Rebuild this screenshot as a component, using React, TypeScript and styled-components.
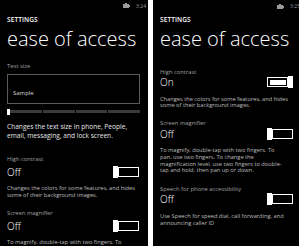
import { FC } from "react";
import styled, { createGlobalStyle } from "styled-components";

const GlobalStyle = createGlobalStyle`
  body {
    margin: 0;
    background: #fff;
  }
`;

const Screens = styled.div`
  display: flex;
  gap: 5px;
  width: 299px;
  height: 246px;
  overflow: hidden;
  background: #fff;
  font-family: "Open Sans", "Noto Sans", sans-serif;
`;

const Phone = styled.div<{ $width: number; $padRight: number }>`
  display: flex;
  flex-direction: column;
  width: ${(p) => p.$width}px;
  height: 246px;
  flex-shrink: 0;
  box-sizing: border-box;
  padding: 0 ${(p) => p.$padRight}px 0 7px;
  background: #000;
  color: #fff;
  overflow: hidden;
`;

const StatusBar = styled.div`
  display: flex;
  justify-content: flex-end;
  align-items: center;
  gap: 6px;
  height: 12px;
  margin-right: -6px;
  font-size: 5px;
  color: #9a9a9a;
`;

const PageLabel = styled.div`
  margin-top: 4px;
  font-size: 6.5px;
  line-height: 8px;
  font-weight: 600;
  letter-spacing: 0.1px;
`;

const Title = styled.div`
  margin-top: 5px;
  font-size: 20px;
  line-height: 20px;
  font-weight: 300;
  white-space: nowrap;
`;

const FieldLabel = styled.div<{ $top: number }>`
  margin-top: ${(p) => p.$top}px;
  font-size: 5.8px;
  line-height: 8px;
  color: #a0a0a0;
  white-space: nowrap;
`;

const SampleBox = styled.div`
  display: flex;
  align-items: flex-end;
  height: 31px;
  margin-top: 4px;
  box-sizing: border-box;
  border: 1px solid #5a5a5a;
  padding: 0 0 6px 5px;
  font-size: 6px;
  line-height: 8px;
  color: #d8d8d8;
`;

const Slider = styled.div`
  display: flex;
  align-items: center;
  height: 5px;
  margin-top: 5px;
`;

const SliderThumb = styled.div`
  width: 3px;
  height: 6px;
  background: #fff;
`;

const SliderTrack = styled.div`
  display: flex;
  flex: 1;
  gap: 1px;
  height: 3px;
`;

const SliderStep = styled.div`
  flex: 1;
  background: #3a3a3a;
`;

const Description = styled.div<{ $big?: boolean; $top: number }>`
  margin-top: ${(p) => p.$top}px;
  font-size: ${(p) => (p.$big ? 6.6 : 5.7)}px;
  line-height: ${(p) => (p.$big ? 9 : 6.8)}px;
  color: ${(p) => (p.$big ? "#e6e6e6" : "#bdbdbd")};
  white-space: nowrap;
`;

const ValueRow = styled.div<{ $top: number }>`
  display: flex;
  justify-content: space-between;
  align-items: center;
  height: 12px;
  margin-top: ${(p) => p.$top}px;
`;

const Value = styled.span`
  font-size: 10px;
  font-weight: 300;
  line-height: 12px;
`;

const Toggle = styled.div<{ $on: boolean }>`
  display: flex;
  flex-direction: ${(p) => (p.$on ? "row-reverse" : "row")};
  align-items: center;
  width: 26px;
  height: 12px;
  margin-right: 1px;
`;

const ToggleThumb = styled.div`
  width: 5px;
  height: 12px;
  background: #fff;
  flex-shrink: 0;
`;

const ToggleTrack = styled.div<{ $on: boolean }>`
  flex: 1;
  height: 10px;
  box-sizing: border-box;
  border: 1.5px solid #fff;
  padding: 1.5px;
  &::after {
    content: "";
    display: ${(p) => (p.$on ? "block" : "none")};
    height: 100%;
    background: #fff;
  }
`;

const StatusIcon: FC = () => (
  <svg width="7" height="5" viewBox="0 0 7 5">
    <rect x="0" y="1" width="6" height="4" fill="#9a9a9a" />
    <rect x="6" y="2" width="1" height="2" fill="#9a9a9a" />
    <rect x="2" y="0" width="2" height="1" fill="#9a9a9a" />
  </svg>
);

interface SettingProps {
  label: string;
  value: string;
  on?: boolean;
  top: number;
  rowTop: number;
  lines: string[];
}

const Setting: FC<SettingProps> = ({ label, value, on = false, top, rowTop, lines }) => (
  <>
    <FieldLabel $top={top}>{label}</FieldLabel>
    <ValueRow $top={rowTop}>
      <Value>{value}</Value>
      <Toggle $on={on}>
        <ToggleThumb />
        <ToggleTrack $on={on} />
      </Toggle>
    </ValueRow>
    <Description $top={7.5}>
      {lines.map((l) => (
        <div key={l}>{l}</div>
      ))}
    </Description>
  </>
);

const Header: FC<{ time: string }> = ({ time }) => (
  <>
    <StatusBar>
      <StatusIcon />
      <span>{time}</span>
    </StatusBar>
    <PageLabel>SETTINGS</PageLabel>
    <Title>ease of access</Title>
  </>
);

const App: FC = () => {
  return (
    <>
      <GlobalStyle />
      <Screens>
        <Phone $width={148} $padRight={8}>
          <Header time="3:24" />
          <FieldLabel $top={13}>Text size</FieldLabel>
          <SampleBox>Sample</SampleBox>
          <Slider>
            <SliderThumb />
            <SliderTrack>
              <SliderStep />
              <SliderStep />
              <SliderStep />
              <SliderStep />
            </SliderTrack>
          </Slider>
          <Description $big $top={7.5}>
            <div>Changes the text size in phone, People,</div>
            <div>email, messaging, and lock screen.</div>
          </Description>
          <Setting
            label="High contrast"
            value="Off"
            top={15.5}
            rowTop={2.5}
            lines={[
              "Changes the colors for some features, and hides",
              "some of their background images.",
            ]}
          />
          <Setting
            label="Screen magnifier"
            value="Off"
            top={10.5}
            rowTop={2.5}
            lines={["To magnify, double-tap with two fingers.  To"]}
          />
        </Phone>
        <Phone $width={146} $padRight={5}>
          <Header time="3:25" />
          <Setting
            label="High contrast"
            value="On"
            on
            top={19}
            rowTop={0}
            lines={[
              "Changes the colors for some features, and hides",
              "some of their background images.",
            ]}
          />
          <Setting
            label="Screen magnifier"
            value="Off"
            top={10}
            rowTop={0.5}
            lines={[
              "To magnify, double-tap with two fingers.  To",
              "pan, use two fingers.  To change the",
              "magnification level, use two fingers to double-",
              "tap and hold, then pan up or down.",
            ]}
          />
          <Setting
            label="Speech for phone accessibility"
            value="Off"
            top={10.5}
            rowTop={0.5}
            lines={[
              "Use Speech for speed dial, call forwarding, and",
              "announcing caller ID",
            ]}
          />
        </Phone>
      </Screens>
    </>
  );
};

export default App;
